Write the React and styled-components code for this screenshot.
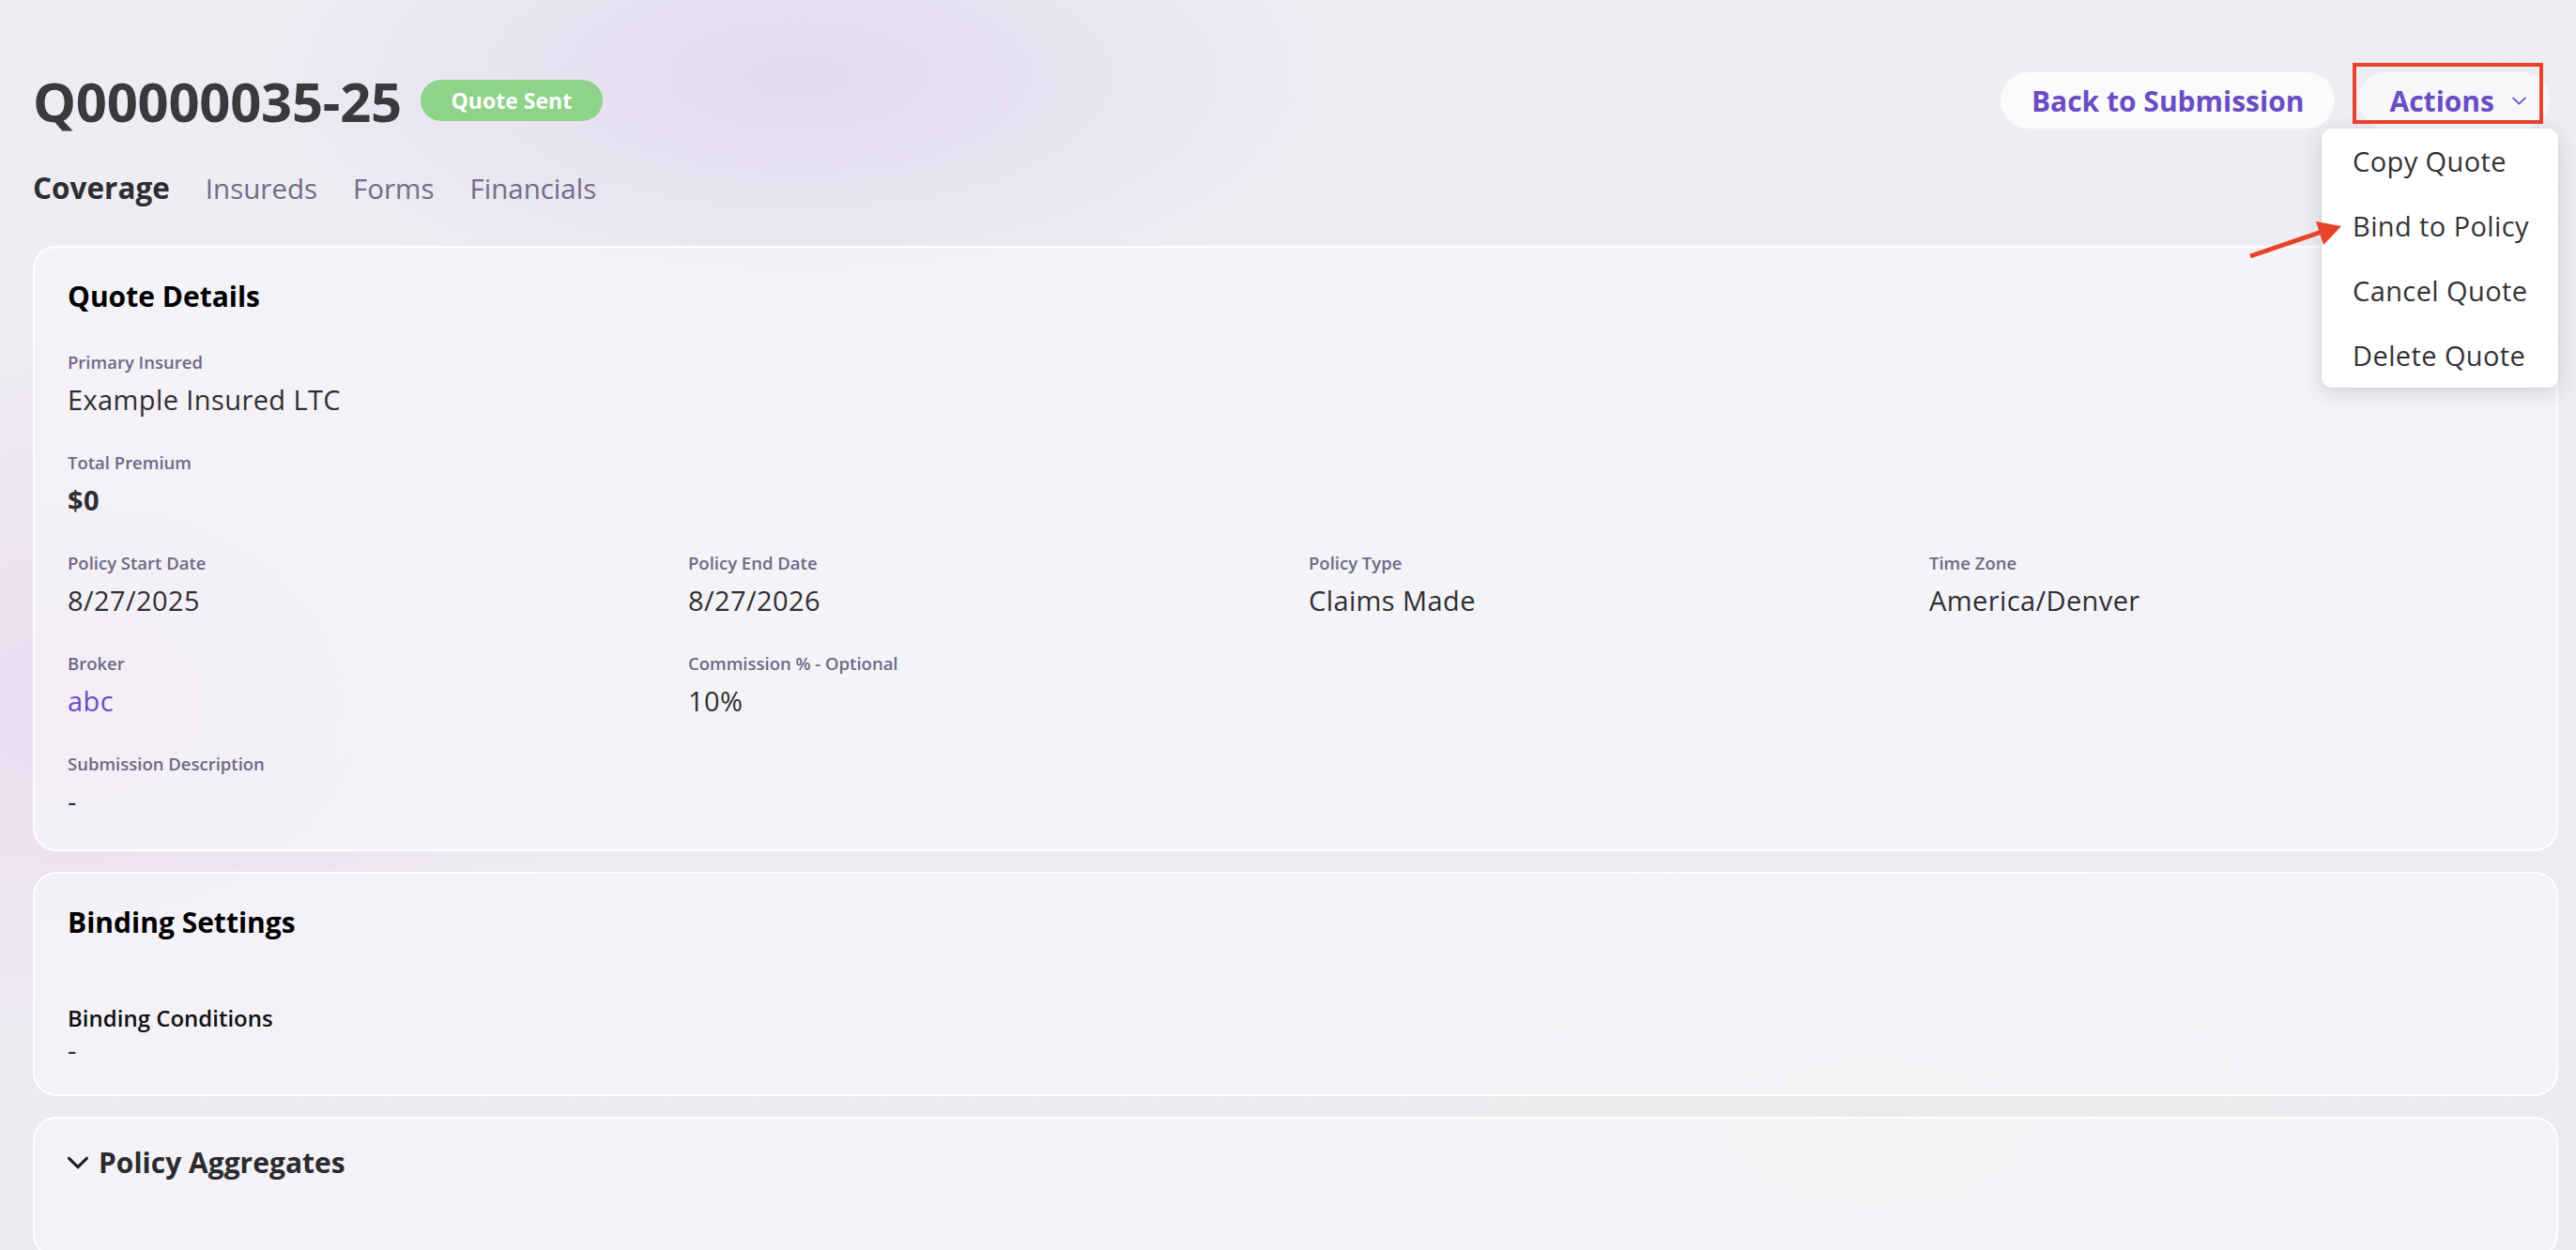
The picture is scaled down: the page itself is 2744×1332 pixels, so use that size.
import React from "react";
import styled, { createGlobalStyle } from "styled-components";

const GlobalStyle = createGlobalStyle`
  html, body {
    margin: 0;
    padding: 0;
    overflow: hidden;
  }
  body {
    font-family: "Open Sans", "Noto Sans", "Liberation Sans", sans-serif;
    background: #edecf2;
  }
  * { box-sizing: border-box; }
`;

const Page = styled.div`
  position: relative;
  min-height: 1332px;
  height: 1332px;
  overflow: hidden;
  padding: 68px 19px 0 35px;
  background:
    radial-gradient(ellipse 900px 380px at 850px 80px, rgba(222, 212, 238, 0.75), rgba(222, 212, 238, 0) 70%),
    radial-gradient(ellipse 800px 600px at 80px 750px, rgba(236, 218, 240, 0.9), rgba(236, 218, 240, 0) 70%),
    radial-gradient(ellipse 900px 500px at 2000px 1200px, rgba(236, 234, 232, 0.9), rgba(236, 234, 232, 0) 70%),
    linear-gradient(180deg, #eeedf3 0%, #edecf2 60%, #ebeaf0 100%);
`;

const Header = styled.header`
  display: flex;
  align-items: center;
  justify-content: space-between;
`;

const TitleGroup = styled.div`
  display: flex;
  align-items: center;
  gap: 20px;
`;

const Title = styled.h1`
  margin: 0;
  font-size: 58px;
  font-weight: 700;
  line-height: 1.362;
  color: #3a3a3d;
  letter-spacing: -0.3px;
`;

const Badge = styled.span`
  display: inline-flex;
  align-items: center;
  justify-content: center;
  height: 44px;
  width: 194px;
  border-radius: 22px;
  background: #8fd28a;
  color: #ffffff;
  font-size: 23px;
  font-weight: 700;
  margin-top: -1px;
`;

const HeaderActions = styled.div`
  display: flex;
  align-items: center;
  gap: 25px;
  margin-right: 9px;
`;

const PillButton = styled.button`
  display: inline-flex;
  align-items: center;
  gap: 19px;
  height: 60px;
  padding: 0 ${(p) => (p.$withChevron ? "25px" : "33px")} 0 33px;
  border: none;
  border-radius: 30px;
  background: ${(p) => (p.$soft ? "rgba(250, 250, 252, 0.75)" : "rgba(252, 252, 253, 0.92)")};
  color: #6a4dc4;
  font-family: inherit;
  font-size: 30px;
  font-weight: 700;
  cursor: pointer;
`;

const ActionsWrap = styled.div`
  position: relative;
`;

const Highlight = styled.div`
  position: absolute;
  top: -10px;
  left: -6px;
  width: 203px;
  height: 65px;
  border: 4px solid #e8432c;
  pointer-events: none;
`;

const Menu = styled.ul`
  position: absolute;
  top: 60px;
  right: -9px;
  width: 252px;
  margin: 0;
  padding: 0;
  list-style: none;
  background: #ffffff;
  border-radius: 10px;
  box-shadow: 0 6px 22px rgba(60, 50, 90, 0.16), 0 1px 4px rgba(60, 50, 90, 0.08);
  z-index: 5;
`;

const MenuItem = styled.li`
  height: 69px;
  line-height: 69px;
  padding-left: 33px;
  font-size: 29px;
  letter-spacing: 0.4px;
  color: #333336;
  white-space: nowrap;
`;

const Tabs = styled.nav`
  display: flex;
  align-items: baseline;
  gap: 38px;
  margin-top: 32px;
`;

const Tab = styled.span`
  font-size: ${(p) => (p.$active ? "31.5px" : "29.5px")};
  line-height: 42px;
  font-weight: ${(p) => (p.$active ? 700 : 400)};
  color: ${(p) => (p.$active ? "#2e2e31" : "#716c88")};
`;

const Cards = styled.div`
  display: flex;
  flex-direction: column;
  gap: 22px;
  margin-top: 40px;
`;

const Card = styled.section`
  border: 2px solid rgba(255, 255, 255, 0.95);
  border-radius: 25px;
  background: rgba(246, 245, 249, 0.72);
  padding: ${(p) => p.$padding || "32px 35px 32px 35px"};
  min-height: ${(p) => p.$minHeight || "auto"};
`;

const CardTitle = styled.h2`
  margin: 0;
  font-size: 30px;
  line-height: 1.362;
  font-weight: 700;
  color: ${(p) => p.$color || "#000000"};
  display: flex;
  align-items: center;
  gap: 11px;
`;

const Stack = styled.div`
  display: flex;
  flex-direction: column;
  gap: 35px;
  margin-top: 36px;
`;

const Grid = styled.div`
  display: grid;
  grid-template-columns: repeat(4, 1fr);
  column-gap: 28px;
  row-gap: 35px;
`;

const Field = styled.div`
  display: flex;
  flex-direction: column;
  gap: 8px;
`;

const Label = styled.div`
  font-size: 18.5px;
  line-height: 26px;
  font-weight: 600;
  color: #6e6986;
`;

const Value = styled.div`
  font-size: 29px;
  line-height: 38px;
  letter-spacing: 0.4px;
  font-weight: ${(p) => (p.$bold ? 700 : 400)};
  color: ${(p) => (p.$link ? "#6a4dc4" : "#2f2f33")};
`;

const SubLabel = styled.div`
  margin-top: 65px;
  font-size: 24px;
  line-height: 31px;
  font-weight: 600;
  color: #111114;
`;

const ArrowOverlay = styled.svg`
  position: absolute;
  left: 2390px;
  top: 230px;
  width: 110px;
  height: 52px;
  overflow: visible;
  pointer-events: none;
  z-index: 6;
`;

const Chevron = ({ size = 14, stroke = "#6a4dc4", width = 1.6, h }) => (
  <svg width={size} height={h || size * 0.62} viewBox="0 0 14 8" fill="none">
    <path d="M1 1 L7 7 L13 1" stroke={stroke} strokeWidth={width} strokeLinecap="round" strokeLinejoin="round" />
  </svg>
);

export default function App() {
  return (
    <>
      <GlobalStyle />
      <Page>
        <Header>
          <TitleGroup>
            <Title>Q00000035-25</Title>
            <Badge>Quote Sent</Badge>
          </TitleGroup>
          <HeaderActions>
            <PillButton>Back to Submission</PillButton>
            <ActionsWrap>
              <PillButton $soft $withChevron>
                Actions
                <Chevron size={15} h={9} width={1.6} />
              </PillButton>
              <Highlight />
              <Menu>
                <MenuItem>Copy Quote</MenuItem>
                <MenuItem>Bind to Policy</MenuItem>
                <MenuItem>Cancel Quote</MenuItem>
                <MenuItem>Delete Quote</MenuItem>
              </Menu>
            </ActionsWrap>
          </HeaderActions>
        </Header>

        <Tabs>
          <Tab $active>Coverage</Tab>
          <Tab>Insureds</Tab>
          <Tab>Forms</Tab>
          <Tab>Financials</Tab>
        </Tabs>

        <Cards>
          <Card>
            <CardTitle>Quote Details</CardTitle>
            <Stack>
              <Field>
                <Label>Primary Insured</Label>
                <Value>Example Insured LTC</Value>
              </Field>
              <Field>
                <Label>Total Premium</Label>
                <Value $bold>$0</Value>
              </Field>
              <Grid>
                <Field>
                  <Label>Policy Start Date</Label>
                  <Value>8/27/2025</Value>
                </Field>
                <Field>
                  <Label>Policy End Date</Label>
                  <Value>8/27/2026</Value>
                </Field>
                <Field>
                  <Label>Policy Type</Label>
                  <Value>Claims Made</Value>
                </Field>
                <Field>
                  <Label>Time Zone</Label>
                  <Value>America/Denver</Value>
                </Field>
                <Field>
                  <Label>Broker</Label>
                  <Value $link>abc</Value>
                </Field>
                <Field>
                  <Label>Commission % - Optional</Label>
                  <Value>10%</Value>
                </Field>
              </Grid>
              <Field>
                <Label>Submission Description</Label>
                <Value>-</Value>
              </Field>
            </Stack>
          </Card>

          <Card $padding="32px 35px 28px 35px">
            <CardTitle>Binding Settings</CardTitle>
            <SubLabel>Binding Conditions</SubLabel>
            <Value>-</Value>
          </Card>

          <Card $padding="27px 35px 0 35px" $minHeight="150px">
            <CardTitle $color="#2b2b2f">
              <Chevron size={22} h={14} stroke="#1e1e22" width={2} />
              Policy Aggregates
            </CardTitle>
          </Card>
        </Cards>

        <ArrowOverlay viewBox="0 0 110 52">
          <line x1="7" y1="43" x2="86" y2="16" stroke="#e8432a" strokeWidth="5" />
          <polygon points="104,11 77,6 85,31" fill="#e8432a" />
        </ArrowOverlay>
      </Page>
    </>
  );
}
